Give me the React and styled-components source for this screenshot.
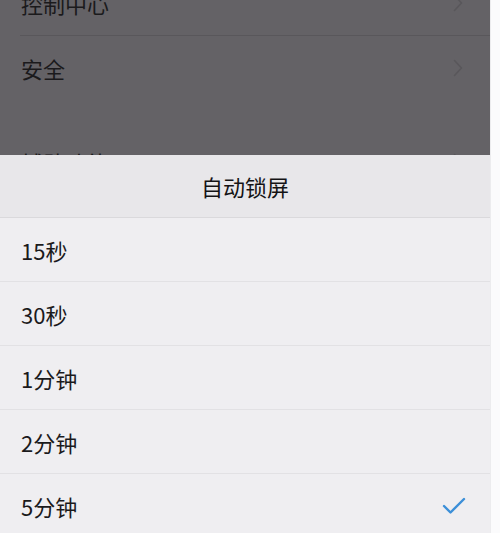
import React from "react";
import styled, { createGlobalStyle } from "styled-components";

const GlobalStyle = createGlobalStyle`
  html, body {
    margin: 0;
    padding: 0;
    background: #fbfbfc;
  }
  body {
    font-family: "Noto Sans CJK SC", "Noto Sans", sans-serif;
  }
`;

const options = ["15秒", "30秒", "1分钟", "2分钟", "5分钟"];
const selected = "5分钟";

export default function App() {
  return (
    <>
      <GlobalStyle />
      <Screen>
        <Dimmed>
          <SettingsList>
            <SettingRow>
              <SettingLabel>控制中心</SettingLabel>
              <Chevron />
            </SettingRow>
            <SettingRow $last>
              <SettingLabel>安全</SettingLabel>
              <Chevron />
            </SettingRow>
            <SectionGap />
            <SettingRow>
              <SettingLabel>辅助功能</SettingLabel>
              <Chevron />
            </SettingRow>
          </SettingsList>
        </Dimmed>
        <Sheet>
          <SheetHeader>自动锁屏</SheetHeader>
          {options.map((o) => (
            <OptionRow key={o}>
              <OptionLabel>{o}</OptionLabel>
              {o === selected && <Check />}
            </OptionRow>
          ))}
        </Sheet>
      </Screen>
    </>
  );
}

function Chevron() {
  return (
    <ChevronSvg width="12" height="20" viewBox="0 0 12 20">
      <path d="M2.5 2.5 L9.5 10 L2.5 17.5" fill="none" stroke="#59575b" strokeWidth="1.6" strokeLinecap="round" strokeLinejoin="round" />
    </ChevronSvg>
  );
}

function Check() {
  return (
    <svg width="24" height="18" viewBox="0 0 24 18">
      <path d="M2 9 L8.5 15.5 L22 2" fill="none" stroke="#3c8fd8" strokeWidth="2.4" strokeLinecap="round" strokeLinejoin="round" />
    </svg>
  );
}

const Screen = styled.div`
  width: 490px;
  height: 533px;
  overflow: hidden;
  display: flex;
  flex-direction: column;
  border-right: 1px solid #ececee;
`;

const Dimmed = styled.div`
  height: 155px;
  flex: none;
  overflow: hidden;
  background: #646266;
`;

const SettingsList = styled.div`
  margin-top: -29px;
  display: flex;
  flex-direction: column;
`;

const SettingRow = styled.div`
  height: 64px;
  margin-left: 20px;
  padding-right: 26px;
  display: flex;
  align-items: center;
  justify-content: space-between;
  border-bottom: 1px solid ${(p) => (p.$last ? "transparent" : "#59575b")};
`;

const SettingLabel = styled.span`
  font-size: 22px;
  color: #1b1a1c;
  margin-left: 1px;
`;

const ChevronSvg = styled.svg`
  flex: none;
`;

const SectionGap = styled.div`
  height: 29px;
`;

const Sheet = styled.div`
  flex: 1;
  display: flex;
  flex-direction: column;
  background: #efeef1;
`;

const SheetHeader = styled.div`
  height: 62px;
  flex: none;
  display: flex;
  align-items: center;
  justify-content: center;
  background: #e8e7ea;
  border-bottom: 1px solid #dad9dc;
  font-size: 22px;
  color: #141315;
`;

const OptionRow = styled.div`
  height: 63px;
  flex: none;
  display: flex;
  align-items: center;
  justify-content: space-between;
  padding: 0 24px 0 21px;
  border-bottom: 1px solid #e2e1e4;
`;

const OptionLabel = styled.span`
  font-size: 22px;
  color: #1b1a1c;
`;
